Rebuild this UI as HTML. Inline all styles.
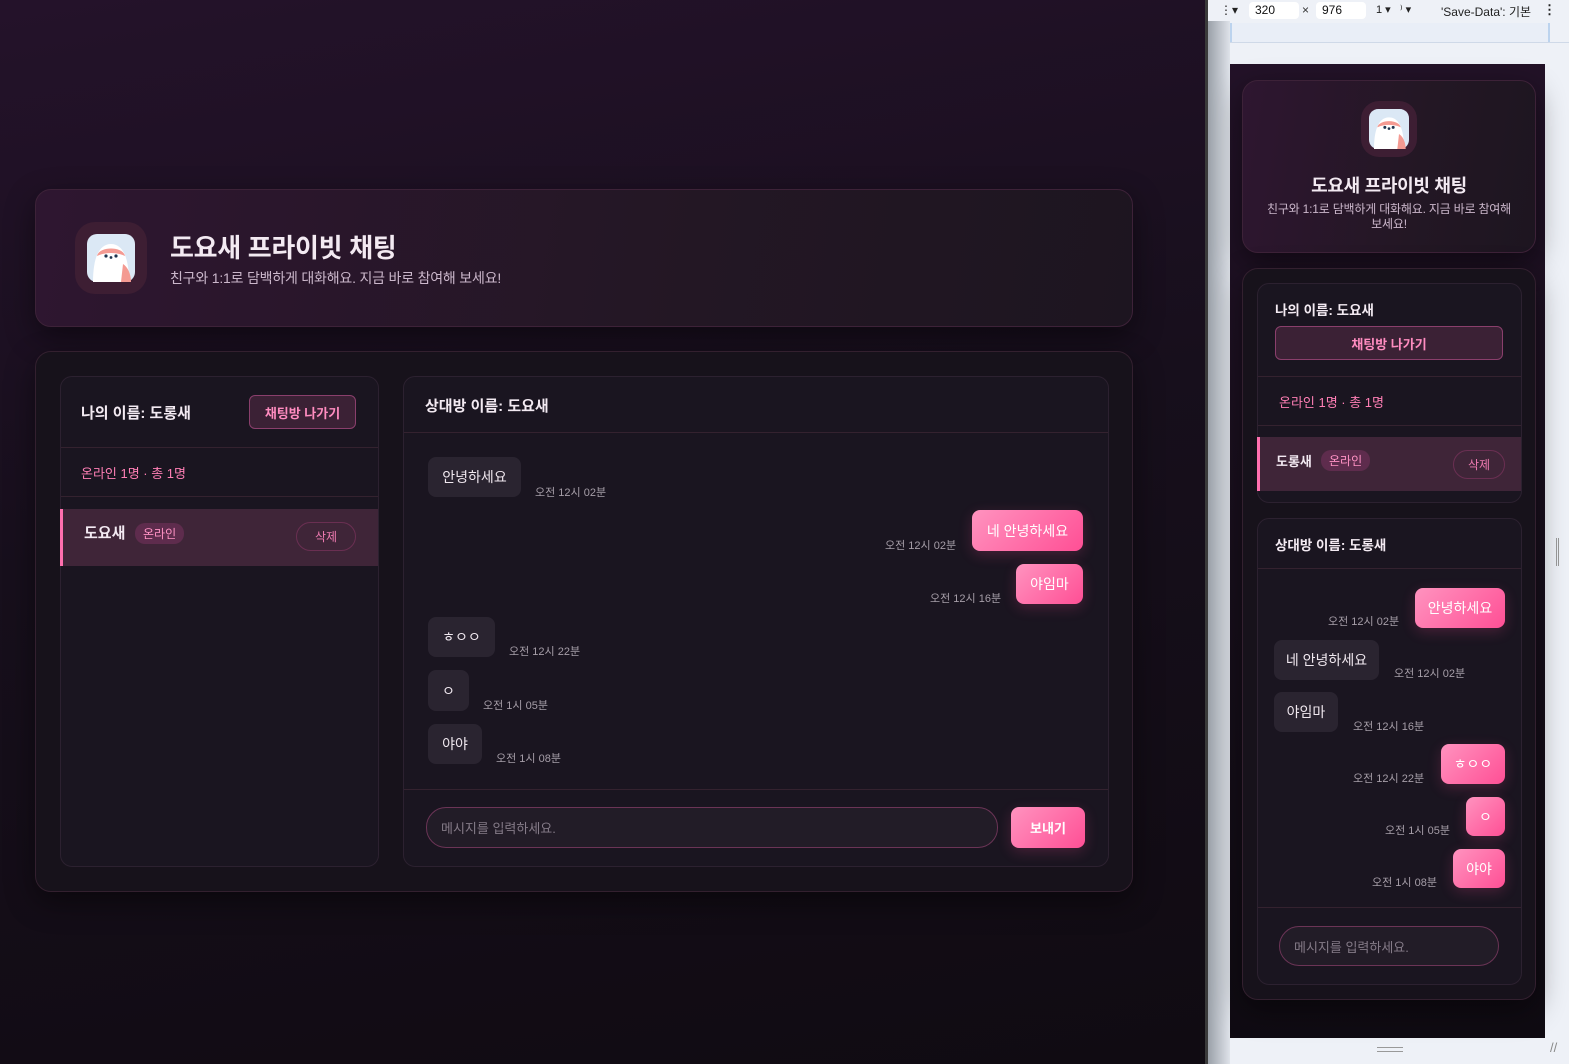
<!DOCTYPE html>
<html><head><meta charset="utf-8"><style>
*{box-sizing:border-box;margin:0;padding:0}
body{width:1569px;height:1064px;overflow:hidden;position:relative;font-family:"Liberation Sans","Noto Sans CJK KR",sans-serif;background:#eef1f7}
.a{position:absolute}
.desk{left:0;top:0;width:1205px;height:1064px;background:linear-gradient(170deg,#24122a 0%,#170f1c 45%,#100b12 100%)}
.card{position:absolute;border:1px solid #33202f;border-radius:16px;background:#17121b;box-shadow:0 10px 30px rgba(0,0,0,.45)}
.hcard{background:linear-gradient(100deg,#2e1630 0%,#231724 60%,#1d1520 100%);border-color:#3d2238}
.panel{position:absolute;border:1px solid #2c2130;border-radius:12px;background:#1a1520}
.line{position:absolute;height:1px;background:#34222f}
.t{position:absolute;white-space:nowrap}
.b{font-weight:bold;color:#f3eaf2}
.pk{color:#ff7fb5}
.btn{position:absolute;border:1px solid #8a3f6c;border-radius:6px;background:#3b2135;color:#ff8cc0;font-weight:bold;font-size:13px;display:flex;align-items:center;justify-content:center}
.sel{position:absolute;background:#3f2538;border-left:3px solid #ff6fae}
.badge{position:absolute;background:#5e2c4d;color:#ff92c4;border-radius:10px;font-size:12px;padding:2px 8px}
.del{position:absolute;border:1px solid #6a2f52;border-radius:16px;color:#ee7ab0;font-size:12px;display:flex;align-items:center;justify-content:center}
.bin{position:absolute;background:#2a2430;border-radius:8px;color:#f0e8ef;font-size:14px;display:flex;align-items:center;justify-content:center}
.bout{position:absolute;background:linear-gradient(135deg,#ff93bf,#ff4f95);border-radius:8px;color:#fff;font-size:14px;display:flex;align-items:center;justify-content:center;box-shadow:0 4px 14px rgba(255,80,150,.2)}
.ts{position:absolute;color:#a69ea8;font-size:11px;white-space:nowrap}
.inp{position:absolute;border:1px solid #6b3456;border-radius:20px;background:#221c27;color:#857b88;font-size:13px;display:flex;align-items:center;padding-left:14px}
</style></head><body>
<div class="a desk"></div>

<!-- desktop header -->
<div class="card hcard" style="left:35px;top:189px;width:1098px;height:138px"></div>
<div class="a" style="left:75px;top:222px;width:72px;height:72px;border-radius:20px;background:#3d1e33"></div>
<svg class="a" style="left:87px;top:234px" width="48" height="48" viewBox="0 0 48 48"><rect width="48" height="48" rx="10" fill="#dbe8f5"/><path d="M6 48 C6 24 12 10 24 10 C36 10 42 24 42 48Z" fill="#fff"/><path d="M10 22 C12 12 36 12 38 22 C30 18 18 18 10 22Z" fill="#f49a92"/><path d="M36 30 C42 34 44 42 44 48 L34 48Z" fill="#f49a92"/><circle cx="19" cy="22" r="1.6" fill="#1f3550"/><circle cx="29" cy="22" r="1.6" fill="#1f3550"/><circle cx="24" cy="23.5" r="1.4" fill="#1f3550"/></svg>
<div class="t b" style="left:170px;top:228px;font-size:26px;letter-spacing:-0.3px">도요새 프라이빗 채팅</div>
<div class="t" style="left:170px;top:268px;font-size:14px;color:#cbb7cb;letter-spacing:-0.2px">친구와 1:1로 담백하게 대화해요. 지금 바로 참여해 보세요!</div>

<!-- desktop main -->
<div class="card" style="left:35px;top:351px;width:1098px;height:541px"></div>
<div class="panel" style="left:60px;top:376px;width:319px;height:491px"></div>
<div class="t b" style="left:81px;top:402px;font-size:15px">나의 이름: 도롱새</div>
<div class="btn" style="left:249px;top:395px;width:107px;height:34px">채팅방 나가기</div>
<div class="line" style="left:61px;top:447px;width:317px"></div>
<div class="t pk" style="left:81px;top:463px;font-size:13px">온라인 1명 · 총 1명</div>
<div class="line" style="left:61px;top:496px;width:317px"></div>
<div class="sel" style="left:60px;top:509px;width:318px;height:57px"></div>
<div class="t b" style="left:84px;top:522px;font-size:15px">도요새</div>
<div class="badge" style="left:135px;top:523px">온라인</div>
<div class="del" style="left:296px;top:522px;width:60px;height:29px">삭제</div>

<div class="panel" style="left:403px;top:376px;width:706px;height:491px"></div>
<div class="t b" style="left:425px;top:395px;font-size:15px">상대방 이름: 도요새</div>
<div class="line" style="left:404px;top:432px;width:704px"></div>
<div class="bin" style="left:428px;top:457px;width:93px;height:40px">안녕하세요</div><div class="ts" style="left:535px;top:484px">오전 12시 02분</div>
<div class="bout" style="left:972px;top:510px;width:111px;height:41px">네 안녕하세요</div><div class="ts" style="left:885px;top:537px">오전 12시 02분</div>
<div class="bout" style="left:1016px;top:564px;width:67px;height:40px">야임마</div><div class="ts" style="left:930px;top:590px">오전 12시 16분</div>
<div class="bin" style="left:428px;top:617px;width:67px;height:40px">ㅎㅇㅇ</div><div class="ts" style="left:509px;top:643px">오전 12시 22분</div>
<div class="bin" style="left:428px;top:670px;width:41px;height:41px">ㅇ</div><div class="ts" style="left:483px;top:697px">오전 1시 05분</div>
<div class="bin" style="left:428px;top:724px;width:54px;height:40px">야야</div><div class="ts" style="left:496px;top:750px">오전 1시 08분</div>
<div class="line" style="left:404px;top:789px;width:704px"></div>
<div class="inp" style="left:426px;top:807px;width:572px;height:41px">메시지를 입력하세요.</div>
<div class="bout" style="left:1011px;top:807px;width:74px;height:41px;font-weight:bold;font-size:13px">보내기</div>

<!-- devtools -->
<div class="a" style="left:1205px;top:0;width:3px;height:1064px;background:#3a3a3a"></div>
<div class="a" style="left:1208px;top:0;width:22px;height:1064px;background:linear-gradient(90deg,#9aa0a8,#dfe3ea)"></div>
<div class="a" style="left:1208px;top:0;width:361px;height:21px;background:#eef1f7"></div>
<div class="t" style="left:1220px;top:3px;font-size:12px;color:#222">⋮▾</div>
<div class="a" style="left:1249px;top:2px;width:50px;height:17px;background:#fff;border-radius:4px;font-size:12px;padding:1px 6px;color:#111">320</div>
<div class="t" style="left:1302px;top:3px;font-size:12px;color:#333">×</div>
<div class="a" style="left:1316px;top:2px;width:50px;height:17px;background:#fff;border-radius:4px;font-size:12px;padding:1px 6px;color:#111">976</div>
<div class="t" style="left:1376px;top:3px;font-size:11px;color:#222">1 ▾ &nbsp; ⁾ ▾</div>
<div class="t" style="left:1441px;top:3px;font-size:12px;color:#222">'Save-Data': 기본</div>
<div class="t" style="left:1543px;top:2px;font-size:13px;color:#222;font-weight:bold">⋮</div>
<div class="a" style="left:1230px;top:23px;width:320px;height:20px;background:#e9eef7;border-left:2px solid #bcd3ee;border-right:2px solid #bcd3ee"></div>
<div class="a" style="left:1230px;top:42px;width:339px;height:1px;background:#cfd9e8"></div>
<div class="a" style="left:1556px;top:538px;width:3px;height:28px;border-left:1px solid #999;border-right:1px solid #999"></div>
<div class="a" style="left:1377px;top:1047px;width:26px;height:5px;border-top:1px solid #999;border-bottom:1px solid #999"></div>
<div class="t" style="left:1550px;top:1040px;font-size:13px;color:#888">//</div>

<!-- mobile viewport -->
<div class="a" style="left:1230px;top:64px;width:315px;height:974px;background:linear-gradient(175deg,#231228 0%,#180f1c 50%,#0f0b12 100%)"></div>
<div class="card hcard" style="left:1242px;top:80px;width:294px;height:173px"></div>
<div class="a" style="left:1361px;top:101px;width:56px;height:56px;border-radius:18px;background:#3d1e33"></div>
<svg class="a" style="left:1369px;top:109px" width="40" height="40" viewBox="0 0 48 48"><rect width="48" height="48" rx="11" fill="#dbe8f5"/><path d="M6 48 C6 24 12 10 24 10 C36 10 42 24 42 48Z" fill="#fff"/><path d="M10 22 C12 12 36 12 38 22 C30 18 18 18 10 22Z" fill="#f49a92"/><path d="M36 30 C42 34 44 42 44 48 L34 48Z" fill="#f49a92"/><circle cx="19" cy="22" r="1.8" fill="#1f3550"/><circle cx="29" cy="22" r="1.8" fill="#1f3550"/><circle cx="24" cy="23.5" r="1.6" fill="#1f3550"/></svg>
<div class="t b" style="left:1242px;width:294px;text-align:center;top:172px;font-size:18px;letter-spacing:-0.3px">도요새 프라이빗 채팅</div>
<div class="a" style="left:1259px;width:260px;text-align:center;top:202px;font-size:12px;line-height:15px;color:#cbb7cb;letter-spacing:-0.2px">친구와 1:1로 담백하게 대화해요. 지금 바로 참여해<br>보세요!</div>

<div class="card" style="left:1242px;top:268px;width:294px;height:732px"></div>
<div class="panel" style="left:1257px;top:283px;width:265px;height:220px"></div>
<div class="t b" style="left:1275px;top:299px;font-size:13.5px">나의 이름: 도요새</div>
<div class="btn" style="left:1275px;top:326px;width:228px;height:34px">채팅방 나가기</div>
<div class="line" style="left:1258px;top:376px;width:263px"></div>
<div class="t pk" style="left:1279px;top:392px;font-size:13px">온라인 1명 · 총 1명</div>
<div class="line" style="left:1258px;top:425px;width:263px"></div>
<div class="sel" style="left:1257px;top:437px;width:264px;height:54px"></div>
<div class="t b" style="left:1276px;top:451px;font-size:13px">도롱새</div>
<div class="badge" style="left:1321px;top:450px">온라인</div>
<div class="del" style="left:1453px;top:450px;width:52px;height:29px">삭제</div>

<div class="panel" style="left:1257px;top:518px;width:265px;height:467px"></div>
<div class="t b" style="left:1275px;top:534px;font-size:13.5px">상대방 이름: 도롱새</div>
<div class="line" style="left:1258px;top:568px;width:263px"></div>
<div class="bout" style="left:1415px;top:588px;width:90px;height:40px">안녕하세요</div><div class="ts" style="left:1328px;top:613px">오전 12시 02분</div>
<div class="bin" style="left:1274px;top:640px;width:105px;height:40px">네 안녕하세요</div><div class="ts" style="left:1394px;top:665px">오전 12시 02분</div>
<div class="bin" style="left:1274px;top:692px;width:64px;height:40px">야임마</div><div class="ts" style="left:1353px;top:718px">오전 12시 16분</div>
<div class="bout" style="left:1441px;top:744px;width:64px;height:40px">ㅎㅇㅇ</div><div class="ts" style="left:1353px;top:770px">오전 12시 22분</div>
<div class="bout" style="left:1466px;top:797px;width:39px;height:39px">ㅇ</div><div class="ts" style="left:1385px;top:822px">오전 1시 05분</div>
<div class="bout" style="left:1453px;top:849px;width:52px;height:39px">야야</div><div class="ts" style="left:1372px;top:874px">오전 1시 08분</div>
<div class="line" style="left:1258px;top:907px;width:263px"></div>
<div class="inp" style="left:1279px;top:926px;width:220px;height:40px">메시지를 입력하세요.</div>
</body></html>
